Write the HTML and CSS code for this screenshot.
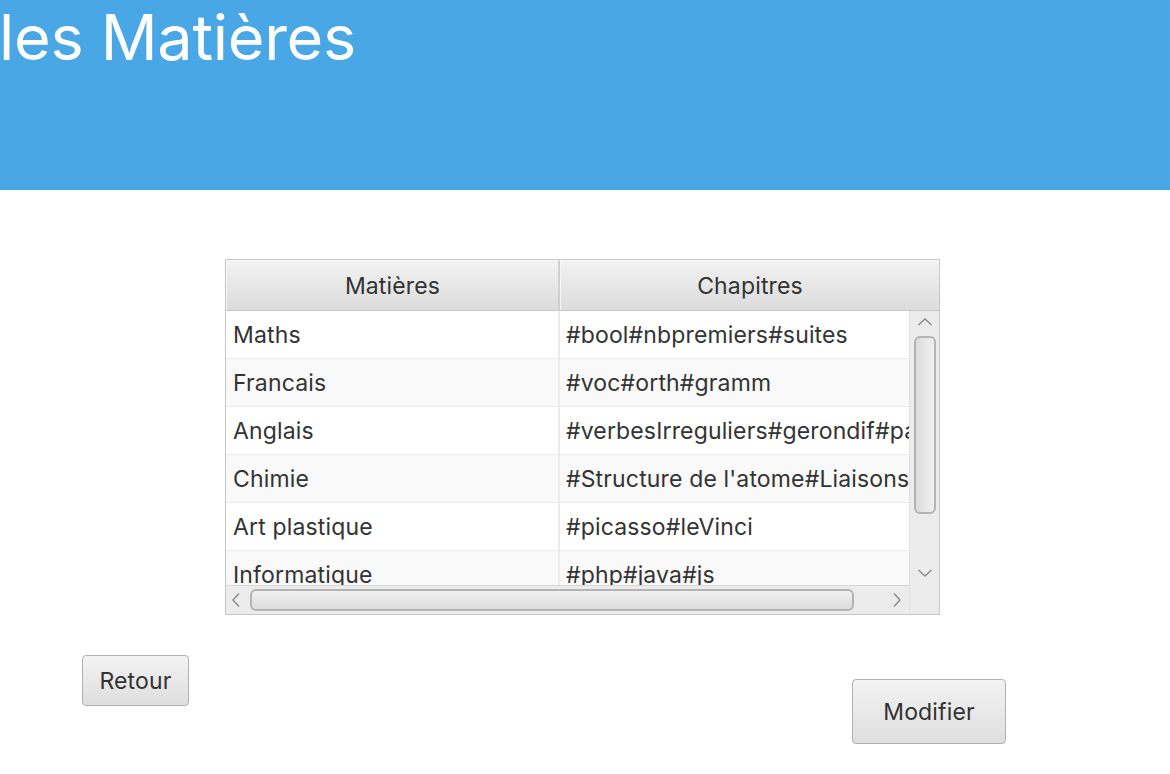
FILE: index.html
```html
<!DOCTYPE html>
<html lang="fr">
<head>
<meta charset="utf-8">
<title>les Matières</title>
<link rel="stylesheet" href="styles.css">
</head>
<body>
<header class="banner">
  <h1 class="title">les Matières</h1>
</header>
<main class="content">
  <div class="table">
    <div class="thead">
      <div class="th col1">Matières</div>
      <div class="th col2">Chapitres</div>
      <div class="th-fill"></div>
    </div>
    <div class="tbody-wrap">
      <div class="tbody">
        <div class="row"><div class="td col1">Maths</div><div class="td col2">#bool#nbpremiers#suites</div></div>
        <div class="row alt"><div class="td col1">Francais</div><div class="td col2">#voc#orth#gramm</div></div>
        <div class="row"><div class="td col1">Anglais</div><div class="td col2">#verbesIrreguliers#gerondif#passif</div></div>
        <div class="row alt"><div class="td col1">Chimie</div><div class="td col2">#Structure de l'atome#Liaisons chimiques</div></div>
        <div class="row"><div class="td col1">Art plastique</div><div class="td col2">#picasso#leVinci</div></div>
        <div class="row alt"><div class="td col1">Informatique</div><div class="td col2">#php#java#js</div></div>
      </div>
      <div class="vscroll">
        <svg class="arrow" width="16" height="10" viewBox="0 0 16 10"><path d="M1.5 8 L8 2 L14.5 8" fill="none" stroke="#8a8a8a" stroke-width="1.4"/></svg>
        <div class="vthumb"></div>
        <div class="vspace"></div>
        <svg class="arrow" width="16" height="10" viewBox="0 0 16 10"><path d="M1.5 2 L8 8 L14.5 2" fill="none" stroke="#8a8a8a" stroke-width="1.4"/></svg>
      </div>
    </div>
    <div class="hscroll-row">
      <div class="hscroll">
        <svg class="harrow" width="10" height="16" viewBox="0 0 10 16"><path d="M8 1.5 L2 8 L8 14.5" fill="none" stroke="#8a8a8a" stroke-width="1.4"/></svg>
        <div class="hthumb"></div>
        <svg class="harrow right" width="10" height="16" viewBox="0 0 10 16"><path d="M2 1.5 L8 8 L2 14.5" fill="none" stroke="#8a8a8a" stroke-width="1.4"/></svg>
      </div>
      <div class="corner"></div>
    </div>
  </div>
  <div class="actions">
    <button class="btn btn-back">Retour</button>
    <button class="btn btn-edit">Modifier</button>
  </div>
</main>
</body>
</html>
```

FILE: styles.css
```css
* { box-sizing: border-box; }
html, body { margin: 0; padding: 0; background: #ffffff; }
body {
  font-family: Inter, "Noto Sans", "Liberation Sans", sans-serif;
  color: #333333;
  width: 1170px;
  height: 774px;
  overflow: hidden;
}
.banner {
  height: 190px;
  background: #48a7e4;
  overflow: hidden;
}
.title {
  margin: 0;
  padding-top: 6px;
  margin-left: -1px;
  font-weight: 400;
  font-size: 63px;
  line-height: 63px;
  color: #fdfdfd;
  letter-spacing: -0.3px;
}
.content {
  padding-top: 69px;
}
.table {
  margin-left: 225px;
  width: 715px;
  height: 356px;
  border: 1px solid #c6c6c6;
  display: flex;
  flex-direction: column;
  background: #ffffff;
  font-size: 23px;
  letter-spacing: 0.15px;
}
.thead {
  display: flex;
  height: 51px;
  border-bottom: 1px solid #c8c8c8;
  flex: none;
}
.th {
  display: flex;
  align-items: center;
  justify-content: center;
  background: linear-gradient(#f2f2f2, #dcdcdc);
  border-top: 1px solid #fafafa;
  border-left: 1px solid #f6f6f6;
  color: #333;
}
.th.col1 { width: 334px; border-right: 2px solid #d0d0d0; }
.th.col2 { width: 379px; }
.th-fill { flex: 1; background: linear-gradient(#f2f2f2, #dcdcdc); }
.col1 { width: 334px; flex: none; }
.col2 { width: 349px; flex: none; }
.tbody-wrap {
  display: flex;
  height: 274px;
  flex: none;
}
.tbody {
  width: 683px;
  overflow: hidden;
}
.row {
  display: flex;
  height: 48px;
  border-bottom: 1px solid #ececec;
  background: #ffffff;
}
.row.alt { background: #f9f9f9; }
.td {
  display: flex;
  align-items: center;
  padding-left: 7px;
  white-space: nowrap;
  overflow: hidden;
}
.td.col1 { border-right: 2px solid #ebebeb; }
.td.col2 { padding-left: 6px; }
.vscroll {
  width: 30px;
  background: #ececec;
  border-left: 1px solid #e2e2e2;
  display: flex;
  flex-direction: column;
  align-items: center;
}
.arrow { flex: none; margin-top: 6px; }
.vthumb {
  margin-top: 9px;
  width: 22px;
  height: 178px;
  border: 2px solid #b4b4b4;
  border-radius: 6px;
  background: linear-gradient(90deg, #dcdcdc, #f0f0f0);
  flex: none;
}
.vspace { flex: 1; }
.vscroll .arrow:last-child { margin-top: 0; margin-bottom: 7px; }
.hscroll-row {
  display: flex;
  height: 29px;
  flex: none;
}
.hscroll {
  width: 683px;
  background: #ececec;
  border-top: 1px solid #d6d6d6;
  display: flex;
  align-items: center;
}
.harrow { flex: none; margin-left: 5px; }
.hthumb {
  margin-left: 9px;
  width: 604px;
  height: 22px;
  border: 2px solid #b4b4b4;
  border-radius: 6px;
  background: linear-gradient(#f0f0f0, #dcdcdc);
}
.harrow.right { margin-left: 38px; }
.corner {
  flex: 1;
  background: #ececec;
  border-left: 1px solid #e2e2e2;
}
.actions {
  display: flex;
  align-items: flex-start;
  padding-left: 82px;
  margin-top: 40px;
}
.btn {
  font-family: Inter, "Noto Sans", "Liberation Sans", sans-serif;
  font-size: 23px;
  letter-spacing: 0.15px;
  color: #333333;
  border: 1.5px solid #b0b0b0;
  border-radius: 4px;
  background: linear-gradient(#f3f3f3, #dedede);
  padding: 0;
}
.btn-back {
  width: 107px;
  height: 51px;
}
.btn-edit {
  margin-left: 663px;
  margin-top: 24px;
  width: 154px;
  height: 65px;
}
```
